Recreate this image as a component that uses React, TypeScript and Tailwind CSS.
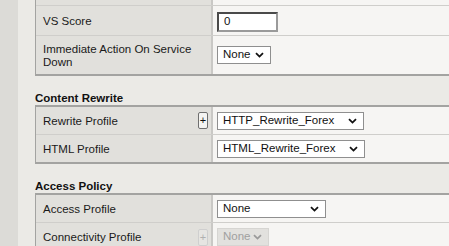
import React from "react";

const font = { fontFamily: '"Liberation Sans", Arial, sans-serif' };

function Chevron({ muted }: { muted?: boolean }) {
  return (
    <svg width="9" height="6" viewBox="0 0 9 6" className="shrink-0">
      <path
        d="M1 1.2 L4.5 4.6 L8 1.2"
        fill="none"
        stroke={muted ? "#9a9a9a" : "#111"}
        strokeWidth="1.8"
      />
    </svg>
  );
}

function Select({ value, width, disabled }: { value: string; width: string; disabled?: boolean }) {
  return (
    <div
      className={`flex h-[18px] items-center justify-between pl-[5px] pr-[6px] text-[11.5px] ${width} ${
        disabled
          ? "border border-[#d6d5d2] bg-[#e2e1de] text-[#a0a0a0]"
          : "border border-[#8f8f8f] bg-white text-[#111]"
      }`}
    >
      <span>{value}</span>
      <Chevron muted={disabled} />
    </div>
  );
}

function PlusButton({ disabled }: { disabled?: boolean }) {
  return (
    <div
      className={`flex h-[17px] w-[10px] items-center justify-center rounded-[2px] border text-[11px] leading-none ${
        disabled ? "border-[#cfcfcf] bg-[#e6e5e2] text-[#b0b0b0]" : "border-[#6f6f6f] bg-[#f4f4f2] text-[#111]"
      }`}
    >
      +
    </div>
  );
}

function Row({
  label,
  children,
  height,
  plus,
  last,
}: {
  label: React.ReactNode;
  children: React.ReactNode;
  height: string;
  plus?: "on" | "off";
  last?: boolean;
}) {
  return (
    <div className={`grid grid-cols-[177px_1fr] ${height} ${last ? "" : "border-b border-[#cfcecb]"}`}>
      <div className="flex items-center justify-between border-r-2 border-[#c9c8c5] bg-[#e1e0dc] pl-[7px] pr-[3px] text-[11.5px] leading-[13px] text-[#1a1a1a]">
        <div className="pt-[1px]">{label}</div>
        {plus && <PlusButton disabled={plus === "off"} />}
      </div>
      <div className="flex items-center bg-[#f6f5f3] pl-[4px]">{children}</div>
    </div>
  );
}

export default function App() {
  return (
    <div className="flex h-[246px] w-[449px] overflow-hidden bg-[#ebeae6]" style={font}>
      <div className="w-[18px] shrink-0 bg-[#dcdbd7]" />
      <div className="flex min-w-0 flex-1 flex-col pl-[17px]">
        {/* Virtual server table, tail end */}
        <div className="-mt-[24px] border-b-2 border-l border-[#a3a3a1] bg-[#f6f5f3]">
          <Row label="" height="h-[30px]">
            <div className="mt-[-26px] h-[18px] w-[94px] border border-[#8f8f8f] bg-white" />
          </Row>
          <Row label="VS Score" height="h-[30px]">
            <div className="mt-[2px] flex h-[20px] w-[61px] items-center border-2 border-[#4a4a4a] border-b-[#9a9a9a] border-r-[#9a9a9a] bg-white pl-[5px] text-[11.5px] text-[#111]">
              0
            </div>
          </Row>
          <Row
            label={
              <>
                Immediate Action On Service
                <br />
                Down
              </>
            }
            height="h-[38px]"
            last
          >
            <Select value="None" width="w-[54px]" />
          </Row>
        </div>

        <div className="mt-[15px] h-[17px] text-[11.5px] font-bold leading-[14px] text-[#111]">Content Rewrite</div>
        <div className="border-y-2 border-l border-[#a3a3a1]">
          <Row label="Rewrite Profile" height="h-[28px]" plus="on">
            <Select value="HTTP_Rewrite_Forex" width="w-[147px]" />
          </Row>
          <Row label="HTML Profile" height="h-[27px]" last>
            <Select value="HTML_Rewrite_Forex" width="w-[148px]" />
          </Row>
        </div>

        <div className="mt-[15px] h-[18px] text-[11.5px] font-bold leading-[14px] text-[#111]">Access Policy</div>
        <div className="border-t-2 border-l border-[#a3a3a1]">
          <Row label="Access Profile" height="h-[28px]">
            <Select value="None" width="w-[109px]" />
          </Row>
          <Row label="Connectivity Profile" height="h-[28px]" plus="off" last>
            <Select value="None" width="w-[52px]" disabled />
          </Row>
        </div>
      </div>
    </div>
  );
}
